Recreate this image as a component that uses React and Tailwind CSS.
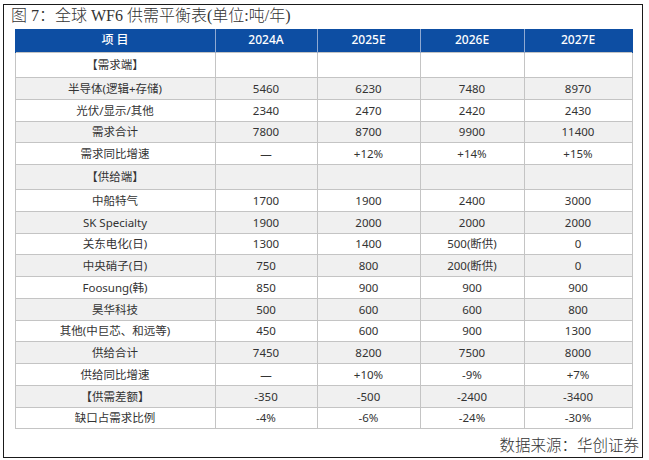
import React from "react";

const rows = [
  { t: "【需求端】", v: ["", "", "", ""], bg: "bg-white", tall: true },
  { t: "半导体(逻辑+存储)", v: ["5460", "6230", "7480", "8970"], bg: "bg-[#f0f0f0]" },
  { t: "光伏/显示/其他", v: ["2340", "2470", "2420", "2430"], bg: "bg-white" },
  { t: "需求合计", v: ["7800", "8700", "9900", "11400"], bg: "bg-[#f0f0f0]" },
  { t: "需求同比增速", v: ["—", "+12%", "+14%", "+15%"], bg: "bg-white" },
  { t: "【供给端】", v: ["", "", "", ""], bg: "bg-[#f0f0f0]", tall: true },
  { t: "中船特气", v: ["1700", "1900", "2400", "3000"], bg: "bg-white" },
  { t: "SK Specialty", v: ["1900", "2000", "2000", "2000"], bg: "bg-[#f0f0f0]" },
  { t: "关东电化(日)", v: ["1300", "1400", "500(断供)", "0"], bg: "bg-white" },
  { t: "中央硝子(日)", v: ["750", "800", "200(断供)", "0"], bg: "bg-[#f0f0f0]" },
  { t: "Foosung(韩)", v: ["850", "900", "900", "900"], bg: "bg-white" },
  { t: "昊华科技", v: ["500", "600", "600", "800"], bg: "bg-[#f0f0f0]" },
  { t: "其他(中巨芯、和远等)", v: ["450", "600", "900", "1300"], bg: "bg-white" },
  { t: "供给合计", v: ["7450", "8200", "7500", "8000"], bg: "bg-[#f0f0f0]" },
  { t: "供给同比增速", v: ["—", "+10%", "-9%", "+7%"], bg: "bg-white" },
  { t: "【供需差额】", v: ["-350", "-500", "-2400", "-3400"], bg: "bg-[#f0f0f0]" },
  { t: "缺口占需求比例", v: ["-4%", "-6%", "-24%", "-30%"], bg: "bg-white" },
];

const colW = ["w-[200px]", "w-[102px]", "w-[103px]", "w-[104px]", "w-[108px]"];

export default function App() {
  return (
    <div className="w-[649px] h-[460px] bg-white pt-[4px] pl-[3px]">
      <div className="w-[640px] h-[454px] border-[1.5px] border-[#1a1a1a] flex flex-col">
        <div
          className="h-[23.5px] pl-[7px] text-[16px] leading-[22px] text-[#333] font-light whitespace-nowrap"
          style={{ fontFamily: '"Liberation Serif", "Noto Sans CJK SC", serif' }}
        >
          图 7：全球 WF6 供需平衡表(单位:吨/年)
        </div>
        <div
          className="ml-[10.5px] w-[617px] text-[11.5px] text-[#333]"
          style={{ fontFamily: '"Noto Sans", "Noto Sans CJK SC", sans-serif' }}
        >
          <table className="border-collapse w-full table-fixed">
            <colgroup>
              {colW.map((c, i) => (
                <col key={i} className={c} />
              ))}
            </colgroup>
            <thead>
              <tr className="h-[24px] bg-[#0d4ea3] text-white text-[12px]">
                {["项 目", "2024A", "2025E", "2026E", "2027E"].map((h, i) => (
                  <th
                    key={i}
                    className="font-medium text-center p-0 border-x-[1.5px] border-[#8fa9d2] first:border-l-[#0d4ea3] last:border-r-[#0d4ea3]"
                  >
                    {h}
                  </th>
                ))}
              </tr>
            </thead>
            <tbody>
              {rows.map((r, i) => (
                <tr key={i} className={`${r.bg} ${r.tall ? "h-[25px]" : "h-[21.75px]"}`}>
                  <td className="text-center p-0 border-[1.5px] border-[#c4c4c4] whitespace-nowrap">{r.t}</td>
                  {r.v.map((v, j) => (
                    <td key={j} className="text-center p-0 border-[1.5px] border-[#c4c4c4] whitespace-nowrap">
                      {v}
                    </td>
                  ))}
                </tr>
              ))}
            </tbody>
          </table>
        </div>
        <div className="flex-1 flex items-end justify-end pr-[3px] pb-[3px]">
          <span
            className="text-[15.5px] leading-[20px] text-[#333] font-light"
            style={{ fontFamily: '"Noto Sans CJK SC", sans-serif' }}
          >
            数据来源：华创证券
          </span>
        </div>
      </div>
    </div>
  );
}
